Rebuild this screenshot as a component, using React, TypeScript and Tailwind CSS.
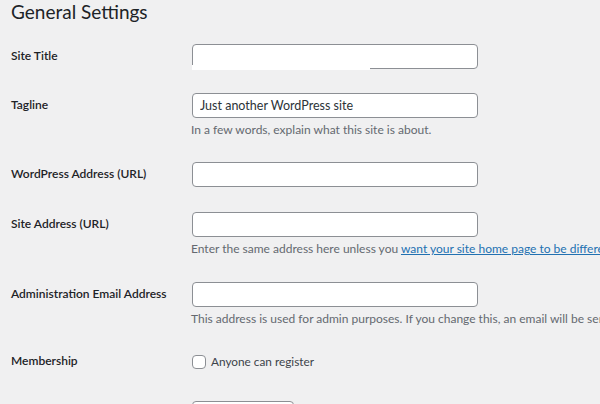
const fieldCls =
  "h-[25px] w-[286px] rounded-[4px] border border-[#8c8f94] bg-white px-[7px] text-[12.5px] text-[#2c3338] outline-none";

const Row = ({
  label,
  children,
  h,
}: {
  label: string;
  children: React.ReactNode;
  h: string;
}) => (
  <div className={`flex ${h}`}>
    <div className="flex h-[25px] w-[181px] shrink-0 items-center mt-[12px] text-[12px] font-semibold text-[#1d2327]">
      {label}
    </div>
    <div className="pt-[12px]">{children}</div>
  </div>
);

const Desc = ({ children }: { children: React.ReactNode }) => (
  <p className="mt-[4px] -ml-px whitespace-nowrap text-[12px] leading-[16px] text-[#646970]">
    {children}
  </p>
);

export default function App() {
  return (
    <div
      className="h-[404px] w-[600px] overflow-hidden bg-[#f0f0f1] pl-[11px]"
      style={{ fontFamily: 'Lato, "Open Sans", sans-serif' }}
    >
      <h1 className="h-[31px] text-[19px] leading-[24px] font-normal text-[#1d2327]">
        General Settings
      </h1>

      {/* Site Title */}
      <Row label="Site Title" h="h-[49px]">
        <div className="relative">
          <input className={fieldCls} defaultValue="" />
          <div className="absolute left-0 top-[22px] h-[5px] w-[178px] bg-white" />
        </div>
      </Row>

      {/* Tagline */}
      <Row label="Tagline" h="h-[69px]">
        <input className={fieldCls} defaultValue="Just another WordPress site" />
        <Desc>In a few words, explain what this site is about.</Desc>
      </Row>

      {/* WordPress Address */}
      <Row label="WordPress Address (URL)" h="h-[50px]">
        <input className={fieldCls} defaultValue="" />
      </Row>

      {/* Site Address */}
      <Row label="Site Address (URL)" h="h-[70px]">
        <input className={fieldCls} defaultValue="" />
        <Desc>
          Enter the same address here unless you{" "}
          <a href="#" className="text-[#2271b1] underline">
            want your site home page to be different from your WordPress installation directory
          </a>
          .
        </Desc>
      </Row>

      {/* Admin Email */}
      <Row label="Administration Email Address" h="h-[69px]">
        <input className={fieldCls} defaultValue="" />
        <Desc>
          This address is used for admin purposes. If you change this, an email will be sent to your new
          address to confirm it.
        </Desc>
      </Row>

      {/* Membership */}
      <div className="flex h-[51px]">
        <div className="mt-[15px] flex h-[16px] w-[181px] shrink-0 items-center text-[12px] font-semibold text-[#1d2327]">
          Membership
        </div>
        <label className="mt-[17px] flex h-[14px] items-center gap-[5px] text-[11.8px] text-[#3c434a]">
          <span className="h-[14px] w-[14px] rounded-[4px] border border-[#8c8f94] bg-white" />
          Anyone can register
        </label>
      </div>

      {/* New User Default Role */}
      <div className="flex">
        <div className="w-[181px] shrink-0" />
        <div className="mt-[12px] h-[25px] w-[102px] rounded-[4px] border border-[#8c8f94] bg-white" />
      </div>
    </div>
  );
}
